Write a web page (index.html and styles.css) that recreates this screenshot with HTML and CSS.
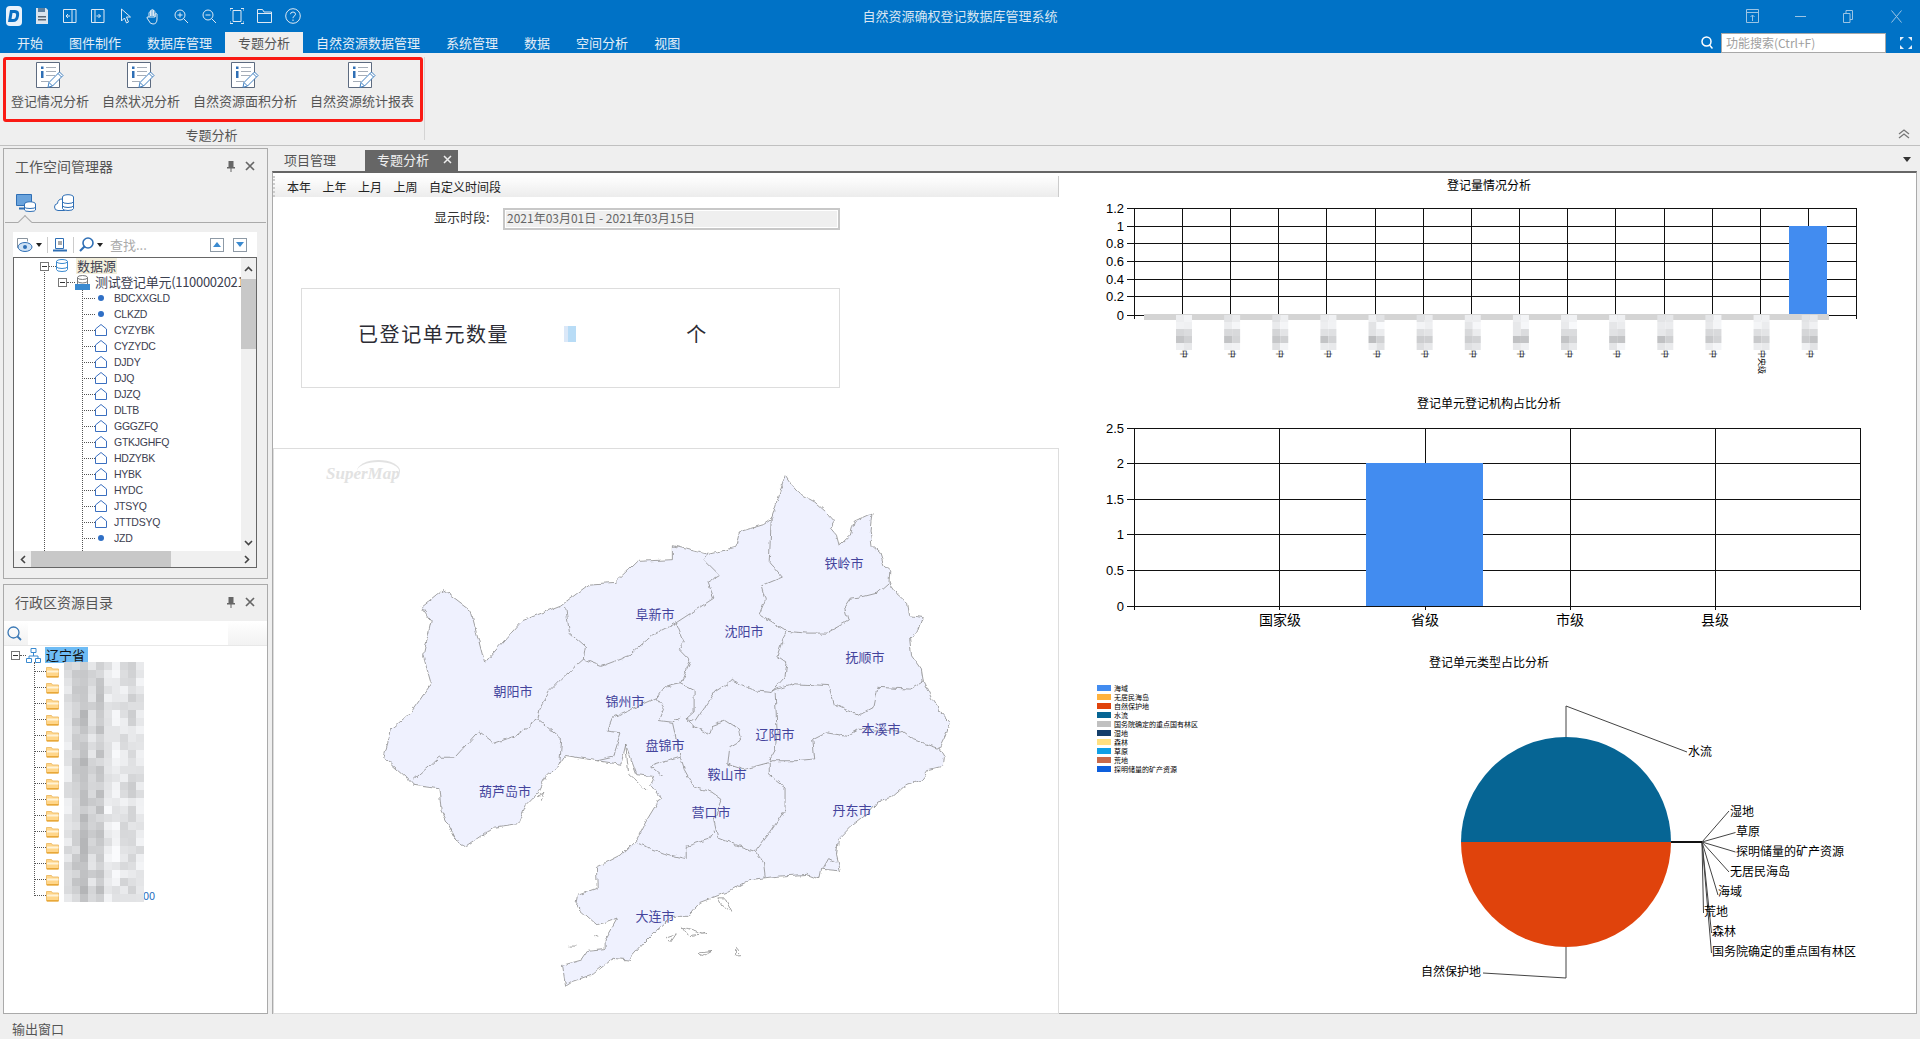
FILE: index.html
```html
<!DOCTYPE html>
<html lang="zh-CN">
<head>
  <meta charset="UTF-8">
  <title>自然资源确权登记数据库管理系统</title>
  <link rel="stylesheet" href="styles.css">
</head>
<body>

<svg class="defs" width="0" height="0">
  <symbol id="i-report" viewBox="0 0 28 26">
    <path d="M.5.5h23v25H.5z" fill="#fff" stroke="#5d6b80"/>
    <path d="M5 4.500h2.500v2.500H5zM5 9h2.500v7H5z" fill="#2f6fb5"/>
    <path d="M10 5.500h10M10 9.500h10M10 13.500h9M5 19.500h8" stroke="#a5adb8" fill="none"/>
    <path d="M13 20.500 23.500 10l3.500 3.500L16.500 24l-4.500 1.300z" fill="#fff" stroke="#3f7fc0"/>
    <path d="M22 11.500l3.500 3.500M13 20.500l3.500 3.500" stroke="#3f7fc0" fill="none"/>
  </symbol>
  <symbol id="i-poly" viewBox="0 0 12 12">
    <path d="M.5 11.500V5L6 .5 11.500 5v6.500z" fill="#fff" stroke="#3a6fc0"/>
  </symbol>
  <symbol id="i-folder" viewBox="0 0 13 13">
    <path d="M.5 2.500h5l1 1.500h6v8H.5z" fill="#ffd68a" stroke="#efc070"/>
    <path d="M1 5.500h11.500v2H1z" fill="#fff3d6"/>
    <path d="M1 11h11.500v1.500H1z" fill="#e8a838"/>
  </symbol>
  <symbol id="i-pin" viewBox="0 0 10 11">
    <path d="M2.500 0h5v6H9v1.500H1V6h1.500zM4.500 7.500h1V11h-1z" fill="#666"/>
  </symbol>
  <symbol id="i-close" viewBox="0 0 10 10">
    <path d="M1 1l8 8M9 1l-8 8" stroke="#666" stroke-width="1.700" fill="none"/>
  </symbol>
</svg>

<header class="titlebar">
  <div class="qat">
    <span class="qat-slot">
      <svg class="logo" width="16" height="20" viewBox="0 0 16 20"><rect width="16" height="20" rx="4" fill="#e8f2fb"/><path d="M4 4h5q5 0 4 6-1 6-6 6H2z" fill="#0a6fc2"/><path d="M6.500 7h2q2 0 1.500 3-.5 3-2.500 3H5.500z" fill="#e8f2fb"/></svg>
    </span>
    <span class="qat-slot">
      <svg width="12" height="16" viewBox="0 0 12 16"><path d="M0 0h10l2 2v14H0z" fill="#d9e4ee"/><path d="M2 0h7v4H2z" fill="#5b7fa0"/><path d="M2 8h8v1.500H2zM2 11h8v1.500H2z" fill="#5a6672"/></svg>
    </span>
    <span class="qat-slot">
      <svg class="line-icon" width="14" height="16" viewBox="0 0 14 16"><path d="M.5 1.500h12.500v13H.500zM9 1.500v13M7 8H3M5 6 3 8l2 2"/></svg>
    </span>
    <span class="qat-slot">
      <svg class="line-icon" width="14" height="16" viewBox="0 0 14 16"><path d="M.5 1.500h12.500v13H.500zM4 1.500v13M5.500 8h4M7.500 6l2 2-2 2"/></svg>
    </span>
    <span class="qat-slot">
      <svg class="line-icon" width="12" height="17" viewBox="0 0 12 17"><path d="M1.500 1v12l3-3 2 5 2-1-2-5h4z"/></svg>
    </span>
    <span class="qat-slot">
      <svg class="line-icon" width="14" height="17" viewBox="0 0 14 17"><path d="M3 9V4.500q1-1 1.500 0V8M4.500 8V2.500q1-1 1.500 0V8M6 8V2q1-1 1.500 0v6M7.500 8V3.500q1-1 1.500 0V9M9 9V6q1.500-1 2 0v5q0 5-4 5-3 0-4-3L1 10q0-1.500 1-1z"/></svg>
    </span>
    <span class="qat-slot">
      <svg class="line-icon" width="15" height="15" viewBox="0 0 15 15"><circle cx="6" cy="6" r="5"/><path d="M9.500 9.500 14 14M3.500 6h5M6 3.500v5"/></svg>
    </span>
    <span class="qat-slot">
      <svg class="line-icon" width="15" height="15" viewBox="0 0 15 15"><circle cx="6" cy="6" r="5"/><path d="M9.500 9.500 14 14M3.500 6h5"/></svg>
    </span>
    <span class="qat-slot">
      <svg class="line-icon" width="14" height="16" viewBox="0 0 14 16"><path d="M3 2.500h8v11H3zM0 3V.5h3M11 .5h3V3M14 13v2.500h-3M3 15.500H0V13"/></svg>
    </span>
    <span class="qat-slot">
      <svg class="line-icon" width="15" height="14" viewBox="0 0 15 14"><path d="M.5 13.500V.5h5l1.500 2.500h7.500v10.500zM.5 4.500h14"/></svg>
    </span>
    <span class="qat-slot">
      <svg class="line-icon" width="16" height="16" viewBox="0 0 16 16"><circle cx="8" cy="8" r="7.300"/><path d="M5.500 6.200q0-2.200 2.500-2.200t2.500 2.200q0 1.300-1.500 2-1 .5-1 2M8 11.500v1.500"/></svg>
    </span>
  </div>
  <div class="app-title">自然资源确权登记数据库管理系统</div>
  <div class="window-btns">
    <span class="win-slot"><svg class="dim-icon" width="13" height="14" viewBox="0 0 13 14"><path d="M.5.5h12v13H.5zM.5 3.500h12M6.500 12V6M4.500 8l2-2 2 2"/></svg></span>
    <span class="win-slot"><svg class="dim-icon" width="11" height="3" viewBox="0 0 11 3"><path d="M0 1.500h11"/></svg></span>
    <span class="win-slot"><svg class="dim-icon" width="10" height="13" viewBox="0 0 10 13"><path d="M.5 3.500h6.500v9H.5zM3 3.500V.5h6.500v9H7"/></svg></span>
    <span class="win-slot"><svg class="dim-icon" width="11" height="13" viewBox="0 0 11 13"><path d="M.5.5l10 12M10.500.5l-10 12"/></svg></span>
  </div>
</header>

<nav class="menubar">
  <a>开始</a>
  <a>图件制作</a>
  <a>数据库管理</a>
  <a class="active">专题分析</a>
  <a>自然资源数据管理</a>
  <a>系统管理</a>
  <a>数据</a>
  <a>空间分析</a>
  <a>视图</a>
  <div class="menu-search">
    <svg class="search-glass" width="12" height="13" viewBox="0 0 12 13"><circle cx="5.500" cy="5.500" r="4.500"/><path d="M8.500 9l3 3.500"/></svg>
    <div class="search-box">功能搜索(Ctrl+F)</div>
    <span class="full-slot">
      <svg width="12" height="12" viewBox="0 0 12 12"><path d="M0 0h4L0 4zM12 0H8l4 4zM0 12h4l-4-4zM12 12H8l4-4z" fill="#e6f0fa"/></svg>
    </span>
  </div>
</nav>

<section class="ribbon">
  <div class="ribbon-group">
    <div class="ribbon-items">
      <div class="ribbon-item"><svg width="28" height="26"><use href="#i-report"/></svg><span>登记情况分析</span></div>
      <div class="ribbon-item"><svg width="28" height="26"><use href="#i-report"/></svg><span>自然状况分析</span></div>
      <div class="ribbon-item"><svg width="28" height="26"><use href="#i-report"/></svg><span>自然资源面积分析</span></div>
      <div class="ribbon-item"><svg width="28" height="26"><use href="#i-report"/></svg><span>自然资源统计报表</span></div>
    </div>
    <div class="group-label">专题分析</div>
  </div>
  <svg class="collapse" width="12" height="10" viewBox="0 0 12 10"><path d="M1 5l5-4 5 4M1 9l5-4 5 4" fill="none" stroke="#777" stroke-width="1.300"/></svg>
</section>

<div class="workspace">
  <aside class="sidebar">
    <div class="panel panel-workspace">
      <div class="panel-head">
        <span>工作空间管理器</span>
        <svg width="10" height="11"><use href="#i-pin"/></svg>
        <svg width="10" height="10"><use href="#i-close"/></svg>
      </div>
      <div class="panel-tabs">
        <svg width="20" height="18" viewBox="0 0 20 18"><path d="M.5.5h15v11H.5z" fill="#6aa3dc" stroke="#2f6fb5"/><path d="M3 14.500h9" stroke="#2f6fb5" stroke-width="2"/><ellipse cx="14" cy="10" rx="5.500" ry="2.200" fill="#fff" stroke="#2f6fb5"/><path d="M8.500 10v6q0 1.500 5.500 1.500t5.500-1.500v-6M8.500 13q0 1.500 5.500 1.500t5.500-1.500" fill="#fff" stroke="#2f6fb5"/></svg>
        <svg width="20" height="17" viewBox="0 0 20 17"><path d="M11 16.500H4q-3.500 0-3.500-3.500 0-3 3-3.500Q4 5 8 5" fill="#fff" stroke="#2f6fb5"/><ellipse cx="14" cy="3" rx="5.500" ry="2.300" fill="#fff" stroke="#2f6fb5"/><path d="M8.500 3v11.500q0 2 5.500 2t5.500-2V3M8.500 7.500q0 2 5.500 2t5.500-2M8.500 11.500q0 2 5.500 2t5.500-2" fill="#fff" stroke="#2f6fb5"/></svg>
      </div>
      <div class="tree-toolbar">
        <svg width="16" height="14" viewBox="0 0 16 14"><path d="M.5.5h10v3M.5.5v9h3" fill="none" stroke="#8a949e"/><ellipse cx="8" cy="9" rx="7" ry="4.500" fill="#cfe2f5" stroke="#2f6fb5"/><circle cx="8" cy="9" r="2" fill="#2f6fb5"/></svg>
        <span class="caret"></span>
        <span class="tool-sep"></span>
        <svg width="14" height="14" viewBox="0 0 14 14"><path d="M2.500.5h8v10h-8z" fill="#fff" stroke="#2f6fb5"/><path d="M5 3h4v4H5z" fill="#aaa"/><path d="M0 12.500h14" stroke="#2f6fb5" stroke-width="2"/></svg>
        <span class="tool-sep"></span>
        <svg width="15" height="15" viewBox="0 0 15 15"><circle cx="9" cy="6" r="5" fill="#fff" stroke="#2f6fb5" stroke-width="1.600"/><path d="M5.500 9.500 1 14" stroke="#2f6fb5" stroke-width="2.200"/></svg>
        <span class="caret"></span>
        <span class="find-hint">查找...</span>
        <span class="nav-btn"><i class="tri-up"></i></span>
        <span class="nav-btn"><i class="tri-down"></i></span>
      </div>
      <div class="tree-box">
        <div class="tree-view">
          <div class="row row-root">
            <i class="expander"></i><i class="stub stub-7"></i>
            <svg width="12" height="14" viewBox="0 0 12 14"><ellipse cx="6" cy="2.500" rx="5.500" ry="2" fill="#fff" stroke="#3a8ad0"/><path d="M.5 2.500v8q0 2 5.500 2t5.500-2v-8M.5 7.500q0 2 5.500 2t5.500-2" fill="none" stroke="#3a8ad0"/></svg>
            <span class="root-label">数据源</span>
          </div>
          <div class="row row-source">
            <i class="expander"></i><i class="stub stub-8"></i>
            <svg width="15" height="15" viewBox="0 0 15 15"><ellipse cx="7.500" cy="2.500" rx="5" ry="2" fill="#fff" stroke="#777"/><path d="M2.500 2.500v7h10v-7M2.500 6q0 2 5 2t5-2" fill="none" stroke="#777"/><path d="M0 9h15v6H0z" fill="#3a8ad0"/></svg>
            <span>测试登记单元(11000020210</span>
          </div>
          <div class="row row-item"><i class="stub"></i><b class="point"></b><span>BDCXXGLD</span></div>
          <div class="row row-item"><i class="stub"></i><b class="point"></b><span>CLKZD</span></div>
          <div class="row row-item"><i class="stub"></i><svg width="12" height="12"><use href="#i-poly"/></svg><span>CYZYBK</span></div>
          <div class="row row-item"><i class="stub"></i><svg width="12" height="12"><use href="#i-poly"/></svg><span>CYZYDC</span></div>
          <div class="row row-item"><i class="stub"></i><svg width="12" height="12"><use href="#i-poly"/></svg><span>DJDY</span></div>
          <div class="row row-item"><i class="stub"></i><svg width="12" height="12"><use href="#i-poly"/></svg><span>DJQ</span></div>
          <div class="row row-item"><i class="stub"></i><svg width="12" height="12"><use href="#i-poly"/></svg><span>DJZQ</span></div>
          <div class="row row-item"><i class="stub"></i><svg width="12" height="12"><use href="#i-poly"/></svg><span>DLTB</span></div>
          <div class="row row-item"><i class="stub"></i><svg width="12" height="12"><use href="#i-poly"/></svg><span>GGGZFQ</span></div>
          <div class="row row-item"><i class="stub"></i><svg width="12" height="12"><use href="#i-poly"/></svg><span>GTKJGHFQ</span></div>
          <div class="row row-item"><i class="stub"></i><svg width="12" height="12"><use href="#i-poly"/></svg><span>HDZYBK</span></div>
          <div class="row row-item"><i class="stub"></i><svg width="12" height="12"><use href="#i-poly"/></svg><span>HYBK</span></div>
          <div class="row row-item"><i class="stub"></i><svg width="12" height="12"><use href="#i-poly"/></svg><span>HYDC</span></div>
          <div class="row row-item"><i class="stub"></i><svg width="12" height="12"><use href="#i-poly"/></svg><span>JTSYQ</span></div>
          <div class="row row-item"><i class="stub"></i><svg width="12" height="12"><use href="#i-poly"/></svg><span>JTTDSYQ</span></div>
          <div class="row row-item"><i class="stub"></i><b class="point"></b><span>JZD</span></div>
        </div>
        <div class="vscroll">
          <svg class="chev" width="9" height="6" viewBox="0 0 9 6"><path d="M1 5l3.500-3.500L8 5"/></svg>
          <div class="vthumb"></div>
          <svg class="chev chev-end" width="9" height="6" viewBox="0 0 9 6"><path d="M1 1l3.500 3.500L8 1"/></svg>
        </div>
        <div class="hscroll">
          <svg class="chev" width="6" height="9" viewBox="0 0 6 9"><path d="M5 1 1.500 4.500 5 8"/></svg>
          <div class="hthumb"></div>
          <svg class="chev chev-end" width="6" height="9" viewBox="0 0 6 9"><path d="M1 1l3.500 3.500L1 8"/></svg>
        </div>
      </div>
    </div>

    <div class="panel panel-regions">
      <div class="panel-head">
        <span>行政区资源目录</span>
        <svg width="10" height="11"><use href="#i-pin"/></svg>
        <svg width="10" height="10"><use href="#i-close"/></svg>
      </div>
      <div class="region-search">
        <svg width="15" height="15" viewBox="0 0 15 15"><circle cx="6.500" cy="6.500" r="5.500" fill="none" stroke="#3a78b5" stroke-width="1.300"/><path d="M10.500 10.500 14 14" stroke="#3a78b5" stroke-width="1.800"/></svg>
        <div class="region-input"></div>
      </div>
      <div class="region-tree">
        <div class="region-row region-root">
          <i class="expander"></i><i class="stub stub-6"></i>
          <svg width="15" height="15" viewBox="0 0 15 15"><path d="M5 .5h5v4H5zM.5 10.500h5v4h-5zM9.500 10.500h5v4h-5zM7.500 4.500V8M3 10.500V8h9v2.500" fill="#fff" stroke="#3a8ad0"/></svg>
          <span class="region-selected">辽宁省</span>
        </div>
        <div class="region-row"><i class="stub"></i><svg width="13" height="13"><use href="#i-folder"/></svg></div>
        <div class="region-row"><i class="stub"></i><svg width="13" height="13"><use href="#i-folder"/></svg></div>
        <div class="region-row"><i class="stub"></i><svg width="13" height="13"><use href="#i-folder"/></svg></div>
        <div class="region-row"><i class="stub"></i><svg width="13" height="13"><use href="#i-folder"/></svg></div>
        <div class="region-row"><i class="stub"></i><svg width="13" height="13"><use href="#i-folder"/></svg></div>
        <div class="region-row"><i class="stub"></i><svg width="13" height="13"><use href="#i-folder"/></svg></div>
        <div class="region-row"><i class="stub"></i><svg width="13" height="13"><use href="#i-folder"/></svg></div>
        <div class="region-row"><i class="stub"></i><svg width="13" height="13"><use href="#i-folder"/></svg></div>
        <div class="region-row"><i class="stub"></i><svg width="13" height="13"><use href="#i-folder"/></svg></div>
        <div class="region-row"><i class="stub"></i><svg width="13" height="13"><use href="#i-folder"/></svg></div>
        <div class="region-row"><i class="stub"></i><svg width="13" height="13"><use href="#i-folder"/></svg></div>
        <div class="region-row"><i class="stub"></i><svg width="13" height="13"><use href="#i-folder"/></svg></div>
        <div class="region-row"><i class="stub"></i><svg width="13" height="13"><use href="#i-folder"/></svg></div>
        <div class="region-row"><i class="stub"></i><svg width="13" height="13"><use href="#i-folder"/></svg></div>
        <div class="region-row"><i class="stub"></i><svg width="13" height="13"><use href="#i-folder"/></svg><span class="region-tail">00</span></div>
        <div id="treeMosaic" class="tree-mosaic"></div>
      </div>
    </div>
  </aside>

  <main class="content">
    <div class="doc-tabs">
      <span class="doc-tab">项目管理</span>
      <span class="doc-tab active">专题分析<svg width="9" height="9" viewBox="0 0 9 9"><path d="M1 1l7 7M8 1 1 8" stroke="#eee" stroke-width="1.500"/></svg></span>
      <i class="doc-menu"></i>
    </div>
    <div class="doc-body">
      <div class="left-col">
        <div class="time-bar">
          <span>本年</span><span>上年</span><span>上月</span><span>上周</span><span>自定义时间段</span>
        </div>
        <div class="period-row">
          <label>显示时段:</label>
          <div class="period-value">2021年03月01日 - 2021年03月15日</div>
        </div>
        <div class="count-card">
          <span class="count-title">已登记单元数量</span>
          <span class="count-bar"></span>
          <span class="count-unit">个</span>
        </div>
        <div class="map-panel">
          <span class="watermark">SuperMap</span>
          <svg class="map" width="620" height="550" viewBox="0 0 620 550">
            <defs>
              <filter id="jag" x="-5%" y="-5%" width="110%" height="110%" color-interpolation-filters="sRGB">
                <feTurbulence type="fractalNoise" baseFrequency="0.14" numOctaves="2" seed="7"/>
                <feDisplacementMap in="SourceGraphic" scale="5" xChannelSelector="R" yChannelSelector="G"/>
              </filter>
            </defs>
            <g filter="url(#jag)">
              <g transform="scale(.3954 .3497)">
                <path class="land" d="M1075 45 1090 70 1110 95 1150 120 1180 150 1200 175 1190 195 1205 215 1212 245 1240 215 1250 175 1295 152 1290 200 1295 245 1315 265 1325 300 1340 315 1338 350 1360 385 1385 410 1390 445 1422 450 1410 490 1390 510 1395 560 1420 600 1425 635 1445 680 1465 715 1492 750 1480 790 1465 825 1478 850 1475 875 1440 885 1420 915 1375 935 1345 965 1310 975 1285 1010 1240 1050 1210 1085 1205 1130 1215 1175 1165 1170 1160 1198 1130 1185 1060 1190 1025 1195 985 1200 930 1235 860 1265 830 1305 790 1305 750 1345 715 1385 680 1430 640 1425 590 1470 540 1490 520 1505 512 1445 560 1430 575 1405 620 1400 620 1370 650 1310 600 1330 570 1300 545 1275 550 1245 600 1225 598 1165 660 1130 700 1085 725 1030 760 965 735 930 745 905 700 900 672 815 660 870 600 860 520 845 505 870 470 905 450 950 420 985 400 1040 340 1050 270 1105 245 1090 205 1000 200 940 135 930 115 905 60 850 80 770 130 720 180 640 160 560 180 460 155 420 210 370 280 430 315 580 370 510 410 460 510 415 580 355 645 350 700 290 790 285 790 245 880 270 950 250 960 205 1020 185 1040 170 1060 100z"/>
                <path class="border" d="M520 420 530 495 570 535 565 570 510 625 480 660 455 710 450 740M135 915 200 850 240 850 300 775 340 810 390 790 450 740 510 800 505 870M565 570 610 590 680 560 740 500 800 465 895 395M895 395 880 350 910 330 870 285 880 270M800 465 820 520 805 540 835 575 810 640M810 640 770 650 750 680 770 710 757 745 790 750 810 735M810 640 845 660 845 720 825 740 840 760M750 680 640 735 625 775 660 780 640 850 600 860M790 750 800 800 810 850 735 875 765 905M825 740 850 745 900 660 940 630 1000 660 1040 665 1075 620 1080 580 1055 560 1070 510 1080 490M1040 170 1035 290 1068 335 1015 360 1025 400 1010 440 1080 490M1080 490 1130 495 1180 495 1235 460 1225 420 1240 395 1275 390 1310 380 1340 350M1040 660 1100 640 1185 645 1200 700 1260 730 1300 705 1310 650 1390 655 1425 630M1145 800 1180 780 1230 790 1260 770 1370 775 1400 800 1465 825M1050 665 1055 780 1050 830 1035 860 1100 860 1150 855 1145 800M840 760 885 785 890 760 925 745 960 770 965 800 935 820 930 870 970 885 1035 865 1035 900 1075 935 1075 1000 1040 1060 1000 1120M810 850 820 885 845 935 890 950 915 970 895 1030 905 1080 950 1100 1000 1120M1000 1120 1020 1150 1025 1195M895 1060 880 1085 825 1105 825 1140 770 1125 700 1095M1170 1170 1185 1140 1205 1150M672 815 680 900 700 920 725 945"/>
                <path class="border" d="M905 1255 925 1255 940 1290 915 1275zM815 1335 875 1355 830 1360zM775 1365 800 1355 785 1380zM855 1410 890 1405 865 1420zM950 1395 965 1415 950 1415zM530 1390 545 1390M590 1360 600 1365M450 960 465 950 455 975"/>
              </g>
            </g>
            <g class="map-labels">
              <text x="484" y="108">铁岭市</text>
              <text x="295" y="159">阜新市</text>
              <text x="384" y="176">沈阳市</text>
              <text x="505" y="202">抚顺市</text>
              <text x="153" y="236">朝阳市</text>
              <text x="265" y="246">锦州市</text>
              <text x="521" y="274">本溪市</text>
              <text x="415" y="279">辽阳市</text>
              <text x="305" y="290">盘锦市</text>
              <text x="367" y="319">鞍山市</text>
              <text x="145" y="336">葫芦岛市</text>
              <text x="351" y="357">营口市</text>
              <text x="492" y="355">丹东市</text>
              <text x="295" y="461">大连市</text>
            </g>
          </svg>
        </div>
      </div>

      <div class="right-col">
        <svg id="chartVolume" class="chart" width="857" height="222" viewBox="1059 173 857 222">
          <text class="chart-title" x="1489" y="190">登记量情况分析</text>
          <path class="grid" d="M1126.500 208.500H1856.500M1126.500 226.500H1856.500M1126.500 243.500H1856.500M1126.500 261.500H1856.500M1126.500 279.500H1856.500M1126.500 296.500H1856.500M1126.500 315.500H1856.500"/>
          <path class="grid" d="M1134.500 208V319M1182.500 208V319M1230.500 208V319M1278.500 208V319M1326.500 208V319M1375.500 208V319M1423.500 208V319M1471.500 208V319M1519.500 208V319M1567.500 208V319M1615.500 208V319M1664.500 208V319M1712.500 208V319M1760.500 208V319M1808.500 208V319M1856.500 208V319"/>
          <text class="axis-y" x="1124" y="213">1.2</text>
          <text class="axis-y" x="1124" y="231">1</text>
          <text class="axis-y" x="1124" y="248">0.8</text>
          <text class="axis-y" x="1124" y="266">0.6</text>
          <text class="axis-y" x="1124" y="284">0.4</text>
          <text class="axis-y" x="1124" y="301">0.2</text>
          <text class="axis-y" x="1124" y="320">0</text>
          <rect x="1789" y="226" width="38" height="89" fill="#428cf0"/>
          <rect x="1144" y="314" width="685" height="6" fill="#d4d4d4"/>
          <g id="volumeLabels"></g>
        </svg>

        <svg class="chart" width="857" height="255" viewBox="1059 395 857 255">
          <text class="chart-title" x="1489" y="408">登记单元登记机构占比分析</text>
          <path class="grid" d="M1126.500 428.500H1860.500M1126.500 463.500H1860.500M1126.500 499.500H1860.500M1126.500 534.500H1860.500M1126.500 570.500H1860.500M1126.500 606.500H1860.500"/>
          <path class="grid" d="M1134.500 428V610M1279.500 428V610M1425.500 428V610M1570.500 428V610M1715.500 428V610M1860.500 428V610"/>
          <text class="axis-y" x="1124" y="433">2.5</text>
          <text class="axis-y" x="1124" y="468">2</text>
          <text class="axis-y" x="1124" y="504">1.5</text>
          <text class="axis-y" x="1124" y="539">1</text>
          <text class="axis-y" x="1124" y="575">0.5</text>
          <text class="axis-y" x="1124" y="611">0</text>
          <rect x="1366" y="463" width="117" height="143" fill="#428cf0"/>
          <text class="axis-x" x="1280" y="625">国家级</text>
          <text class="axis-x" x="1425" y="625">省级</text>
          <text class="axis-x" x="1570" y="625">市级</text>
          <text class="axis-x" x="1715" y="625">县级</text>
        </svg>

        <svg class="chart" width="857" height="363" viewBox="1059 650 857 363">
          <text class="chart-title" x="1489" y="667">登记单元类型占比分析</text>
          <g class="legend">
            <rect x="1097" y="685" width="14" height="6" fill="#428cf0"/><text x="1114" y="691">海域</text>
            <rect x="1097" y="694" width="14" height="6" fill="#ffb23e"/><text x="1114" y="700">无居民海岛</text>
            <rect x="1097" y="703" width="14" height="6" fill="#e0430c"/><text x="1114" y="709">自然保护地</text>
            <rect x="1097" y="712" width="14" height="6" fill="#066594"/><text x="1114" y="718">水流</text>
            <rect x="1097" y="721" width="14" height="6" fill="#c0c0c0"/><text x="1114" y="727">国务院确定的重点国有林区</text>
            <rect x="1097" y="730" width="14" height="6" fill="#153e6a"/><text x="1114" y="736">湿地</text>
            <rect x="1097" y="739" width="14" height="6" fill="#ffe081"/><text x="1114" y="745">森林</text>
            <rect x="1097" y="748" width="14" height="6" fill="#0f9fe6"/><text x="1114" y="754">草原</text>
            <rect x="1097" y="757" width="14" height="6" fill="#c8694a"/><text x="1114" y="763">荒地</text>
            <rect x="1097" y="766" width="14" height="6" fill="#0e5fdc"/><text x="1114" y="772">探明储量的矿产资源</text>
          </g>
          <path d="M1461 842a105 105 0 0 1 210 0z" fill="#066594"/>
          <path d="M1461 842a105 105 0 0 0 210 0z" fill="#e0430c"/>
          <path class="leader" d="M1566 737V706L1687 752M1566 947V978L1483 973"/>
          <path class="leader" d="M1702 842 1729 811M1702 842 1735.500 832.500M1702 842 1735.500 852M1702 842 1729 872M1702 842 1718 895M1702 842 1703.500 913M1702 842 1711.500 933M1702 842 1711.500 953"/>
          <path class="leader-main" d="M1671 842H1702"/>
          <g class="pie-label">
            <text x="1688" y="756">水流</text>
            <text x="1421" y="976">自然保护地</text>
            <text x="1730" y="816">湿地</text>
            <text x="1736" y="836">草原</text>
            <text x="1736" y="856">探明储量的矿产资源</text>
            <text x="1730" y="876">无居民海岛</text>
            <text x="1718" y="896">海域</text>
            <text x="1704" y="916">荒地</text>
            <text x="1712" y="936">森林</text>
            <text x="1712" y="956">国务院确定的重点国有林区</text>
          </g>
        </svg>
      </div>
    </div>
  </main>
</div>

<footer class="statusbar">输出窗口</footer>

<script src="script.js"></script>
</body>
</html>
```

FILE: styles.css
```css
* {
  box-sizing: border-box;
}

html, body {
  margin: 0;
  height: 1039px;
  overflow: hidden;
}

body {
  background: #efefef;
  color: #444;
  font-family: "Noto Sans CJK SC", "Liberation Sans", sans-serif;
  font-size: 13px;
  line-height: 16px;
}

.defs {
  position: absolute;
}

svg {
  flex-shrink: 0;
}

/* title bar + menu */
.titlebar {
  display: grid;
  grid-template-columns: 1fr auto 1fr;
  height: 32px;
  background: #0072c6;
  align-items: center;
}

.qat {
  display: flex;
  align-items: center;
}

.qat-slot {
  display: flex;
  width: 27.900px;
  justify-content: center;
  align-items: center;
}

.line-icon {
  fill: none;
  stroke: #dfe9f3;
  stroke-width: 1;
}

.app-title {
  color: #d9e6f2;
  font-size: 13px;
}

.window-btns {
  display: flex;
  justify-content: flex-end;
  align-items: center;
}

.win-slot {
  display: flex;
  width: 48px;
  justify-content: center;
  align-items: center;
}

.dim-icon {
  fill: none;
  stroke: #9cc4e4;
  stroke-width: 1;
}

.menubar {
  display: flex;
  height: 21px;
  padding-left: 4px;
  background: #0072c6;
  color: #e4eef7;
}

.menubar a {
  padding: 0 13px;
  line-height: 21px;
}

.menubar a.active {
  background: #efefef;
  color: #555;
}

.menu-search {
  display: flex;
  margin-left: auto;
  align-items: center;
}

.search-glass {
  margin-right: 8px;
  fill: none;
  stroke: #fff;
  stroke-width: 1.500;
}

.search-box {
  width: 165px;
  height: 20px;
  margin-top: 1px;
  padding-left: 4px;
  background: #fff;
  border: 1px solid #a8a8a8;
  color: #a0a0a0;
  font-size: 12px;
  line-height: 18px;
}

.full-slot {
  display: flex;
  width: 34px;
  padding-left: 14px;
}

/* ribbon */
.ribbon {
  position: relative;
  height: 93px;
  padding: 4px 0 0 3px;
  border-bottom: 1px solid #c0c0c0;
}

.ribbon-group {
  width: 422px;
  height: 83px;
  border-right: 1px solid #d4d4d4;
}

.ribbon-items {
  display: flex;
  width: 420px;
  height: 65px;
  padding: 2px 0 0 5px;
  gap: 13px;
  border: 3px solid #fa1a14;
  border-radius: 3px;
}

.ribbon-item {
  display: flex;
  flex-direction: column;
  align-items: center;
  color: #555;
}

.ribbon-item span {
  margin-top: 5px;
}

.group-label {
  margin-top: 5px;
  text-align: center;
  color: #555;
  padding-right: 4px;
}

.collapse {
  position: absolute;
  right: 10px;
  bottom: 6px;
}

/* workspace */
.workspace {
  display: flex;
  height: 868px;
}

.sidebar {
  display: flex;
  flex-direction: column;
  width: 272px;
  padding: 2px 4px 0 3px;
  gap: 5px;
}

.panel {
  border: 1px solid #aaa;
}

.panel-workspace {
  height: 431px;
}

.panel-regions {
  height: 430px;
  background: #fff;
}

.panel-head {
  display: flex;
  height: 36px;
  padding: 0 12px 2px 11px;
  gap: 9px;
  background: #efefef;
  align-items: center;
  font-size: 14px;
  color: #555;
}

.panel-head span {
  margin-right: auto;
}

.panel-tabs {
  position: relative;
  display: flex;
  height: 38px;
  margin: 0 1px;
  padding: 9px 0 0 11px;
  gap: 18px;
  border-bottom: 1px solid #aaa;
}

.panel-tabs::after {
  content: "";
  position: absolute;
  left: 15px;
  bottom: -5px;
  width: 9px;
  height: 9px;
  background: #efefef;
  border-top: 1px solid #aaa;
  border-left: 1px solid #aaa;
  transform: rotate(45deg);
}

.tree-toolbar {
  display: flex;
  width: 244px;
  height: 25px;
  margin: 9px 0 0 9px;
  padding: 0 10px 0 4px;
  background: #fff;
  align-items: center;
}

.caret {
  width: 0;
  height: 0;
  margin: 0 5px 0 3px;
  border: 3px solid transparent;
  border-top: 4px solid #222;
  border-bottom: 0;
}

.tool-sep {
  width: 1px;
  height: 16px;
  margin-right: 5px;
  background: #ccc;
}

.tree-toolbar > svg + .tool-sep {
  margin-left: 6px;
}

.find-hint {
  margin-right: auto;
  color: #aaa;
  font-size: 13px;
  margin-left: 2px;
}

.nav-btn {
  display: flex;
  width: 14px;
  height: 14px;
  margin-left: 9px;
  border: 1px solid #8e9aa6;
  align-items: center;
  justify-content: center;
}

.tri-up, .tri-down {
  width: 0;
  height: 0;
  border-left: 4px solid transparent;
  border-right: 4px solid transparent;
}

.tri-up {
  border-bottom: 5px solid #3a8ad0;
}

.tri-down {
  border-top: 5px solid #3a8ad0;
}

.tree-box {
  display: grid;
  grid-template-columns: 1fr 15px;
  grid-template-rows: 1fr 16px;
  width: 244px;
  height: 311px;
  margin-left: 9px;
  background: #fff;
  border: 1px solid #666;
}

.tree-view {
  position: relative;
  overflow: hidden;
  font-family: "Liberation Sans", "Noto Sans CJK SC", sans-serif;
  font-size: 10.500px;
  color: #3c4050;
}

.tree-view::before,
.tree-view::after {
  content: "";
  position: absolute;
  bottom: 0;
  border-left: 1px dotted #555;
}

.tree-view::before {
  left: 30px;
  top: 12px;
}

.tree-view::after {
  left: 68px;
  top: 32px;
}

.row {
  position: relative;
  display: flex;
  height: 16px;
  align-items: center;
  white-space: nowrap;
}

.row-root {
  padding-left: 26px;
  font-family: "Noto Sans CJK SC", sans-serif;
  font-size: 13px;
}

.root-label {
  margin-left: 8px;
  padding: 0 1px;
  background: #f3efdc;
}

.row-source {
  padding-left: 44px;
  font-size: 12px;
  font-family: "Noto Sans CJK SC", sans-serif;
}

.row-source span {
  margin-left: 5px;
  font-size: 13px;
  letter-spacing: -.3px;
}

.row-item {
  padding-left: 68px;
  letter-spacing: -.25px;
}

.row-item span {
  margin-left: 7px;
}

.expander {
  position: relative;
  z-index: 1;
  flex-shrink: 0;
  width: 9px;
  height: 9px;
  background: #fff;
  border: 1px solid #777;
}

.expander::after {
  content: "";
  position: absolute;
  left: 1px;
  right: 1px;
  top: 3px;
  height: 1px;
  background: #333;
}

.stub {
  flex-shrink: 0;
  width: 13px;
  border-top: 1px dotted #555;
}

.stub-7 {
  width: 7px;
}

.stub-8 {
  width: 8px;
}

.point {
  display: block;
  width: 6px;
  height: 6px;
  margin: 0 3px;
  background: #2f6fc5;
  border-radius: 50%;
}

.vscroll {
  display: flex;
  flex-direction: column;
  padding-top: 8px;
  background: #f0f0f0;
  align-items: center;
}

.vthumb {
  align-self: stretch;
  height: 70px;
  margin-top: 7px;
  background: #c8c8c8;
}

.hscroll {
  grid-column: 1 / 3;
  display: flex;
  padding-left: 6px;
  background: #f0f0f0;
  align-items: center;
}

.hthumb {
  align-self: stretch;
  width: 140px;
  margin-left: 5px;
  background: #c8c8c8;
}

.chev {
  fill: none;
  stroke: #444;
  stroke-width: 1.600;
}

.chev-end {
  margin: auto 6px auto auto;
}

.vscroll .chev-end {
  margin: auto 0 5px;
}

.region-search {
  display: flex;
  height: 25px;
  padding-left: 3px;
  background: linear-gradient(#fff, #f2f2f2);
  align-items: center;
  border-bottom: 1px solid #e8e8e8;
}

.region-input {
  width: 200px;
  height: 24px;
  margin-left: 6px;
  background: #fff;
}

.region-tree {
  position: relative;
  padding: 1px 0 0 7px;
}

.region-tree::before {
  content: "";
  position: absolute;
  left: 30px;
  top: 16px;
  height: 234px;
  border-left: 1px dotted #555;
}

.region-row {
  display: flex;
  height: 16px;
  padding-left: 23px;
  align-items: center;
}

.region-row .stub {
  width: 12px;
}

.region-root {
  padding-left: 0;
}

.region-root .stub-6 {
  width: 6px;
}

.region-selected {
  margin-left: 4px;
  padding: 0 1px;
  width: 43px;
  background: #6ebcf5;
  color: #111;
  font-size: 13px;
}

.region-tail {
  margin-left: 84px;
  color: #2a6fc0;
  font-size: 11px;
}

.tree-mosaic {
  position: absolute;
  left: 60px;
  top: 16px;
  display: grid;
  grid-template-columns: repeat(10, 8px);
  grid-auto-rows: 8px;
}

/* document area */
.content {
  width: 1645px;
}

.doc-tabs {
  position: relative;
  display: flex;
  height: 25px;
  padding-top: 4px;
}

.doc-tab {
  display: flex;
  width: 93px;
  padding: 0 0 2px 16px;
  gap: 14px;
  align-items: center;
  color: #555;
}

.doc-tab.active {
  background: #666;
  color: #f0f0f0;
  padding-left: 12px;
}

.doc-tab:first-child {
  padding-left: 12px;
}

.doc-menu {
  position: absolute;
  right: 6px;
  top: 11px;
  border-left: 4px solid transparent;
  border-right: 4px solid transparent;
  border-top: 5px solid #333;
}

.doc-body {
  display: flex;
  height: 843px;
  background: #fff;
  border-top: 2px solid #666;
  border-left: 1px solid #aaa;
  border-right: 1px solid #aaa;
  border-bottom: 1px solid #aaa;
}

.left-col {
  width: 786px;
}

.time-bar {
  display: flex;
  height: 21px;
  margin-top: 3px;
  padding-left: 12px;
  gap: 11.500px;
  background: linear-gradient(#fff, #ececec);
  border-right: 1px solid #ccc;
  align-items: center;
  font-size: 12px;
  color: #222;
  border-left: 2px dotted #ccc;
}

.period-row {
  display: flex;
  height: 22px;
  margin-top: 11px;
  padding-left: 161px;
  align-items: center;
}

.period-row label {
  width: 69px;
  margin-top: -4px;
  color: #333;
}

.period-value {
  width: 337px;
  height: 22px;
  padding-left: 2px;
  background: #efefef;
  border: 2px solid #c8c8c8;
  outline: 1px solid #fff;
  outline-offset: -3px;
  color: #666;
  font-size: 12px;
  line-height: 16px;
}

.count-card {
  display: flex;
  width: 539px;
  height: 100px;
  margin: 58px 0 0 28px;
  padding: 0 0 8px 56px;
  border: 1px solid #ddd;
  align-items: center;
  font-size: 20px;
  line-height: 24px;
  color: #2c2c34;
}

.count-title {
  letter-spacing: 1.600px;
}

.count-bar {
  width: 12px;
  height: 16px;
  margin: 0 110px 0 55px;
  background: linear-gradient(90deg, #dbe8f8 30%, #b8dcf6 30%);
}

.map-panel {
  position: relative;
  height: 566px;
  margin-top: 60px;
  border: 1px solid #ddd;
}

.watermark {
  position: absolute;
  left: 52px;
  top: 17px;
  color: #e2e2e2;
  font-family: "Liberation Serif", serif;
  font-size: 17px;
  font-style: italic;
  font-weight: bold;
}

.watermark::after {
  content: "";
  position: absolute;
  right: 0;
  top: -6px;
  width: 42px;
  height: 20px;
  border-top: 2px solid #e2e2e2;
  border-right: 1px solid #e2e2e2;
  border-radius: 50%;
}

.map {
  position: absolute;
  left: 86px;
  top: 11px;
}

.land {
  fill: #eff1fe;
  stroke: #8c8c8c;
  stroke-width: .8;
  vector-effect: non-scaling-stroke;
}

.border {
  fill: none;
  stroke: #8c8c8c;
  stroke-width: .8;
  vector-effect: non-scaling-stroke;
}

.map-labels text {
  fill: #44449c;
  font-size: 13px;
  text-anchor: middle;
}

.right-col {
  width: 857px;
}

.chart {
  display: block;
}

.chart text {
  fill: #000;
  font-family: "Noto Sans CJK SC", sans-serif;
}

.chart-title {
  font-size: 12px;
  text-anchor: middle;
}

.grid {
  fill: none;
  stroke: #111;
  stroke-width: 1;
  shape-rendering: crispEdges;
}

.chart .axis-y {
  font-family: "Liberation Sans", sans-serif;
  font-size: 13px;
  text-anchor: end;
}

.axis-x {
  font-size: 14px;
  text-anchor: middle;
}

.legend text {
  font-size: 7px;
}

.leader {
  fill: none;
  stroke: #444;
  stroke-width: 1;
}

.leader-main {
  fill: none;
  stroke: #111;
  stroke-width: 2;
}

.pie-label text {
  font-size: 12px;
}

.chart .rot-label {
  font-size: 8px;
}

.statusbar {
  padding: 7px 0 0 12px;
  color: #555;
}
```

FILE: script.js
```js
// small repeatable noise so the blurred blocks look the same every load
let seed = 37;
function noise() {
  seed = (seed * 16807) % 2147483647;
  return seed / 2147483647;
}

function grey(base, spread) {
  const v = Math.round(base + (noise() - 0.5) * spread);
  return `rgb(${v}, ${v + 1}, ${v + 3})`;
}

// blurred names in the region tree
const colTones = [228, 208, 192, 216, 202, 234, 236, 226, 218, 230];
const mosaic = document.getElementById('treeMosaic');
for (let row = 0; row < 30; row++) {
  for (let col = 0; col < 10; col++) {
    const cell = document.createElement('div');
    cell.style.background = grey(colTones[col], 30);
    mosaic.appendChild(cell);
  }
}

// blurred axis labels of the first chart
const labels = document.getElementById('volumeLabels');
const rowTones = [232, 236, 222, 198, 230];
const NS = 'http://www.w3.org/2000/svg';
for (let i = 0; i < 14; i++) {
  const x = 1176 + i * 48.13;
  for (let row = 0; row < 5; row++) {
    for (let col = 0; col < 2; col++) {
      const r = document.createElementNS(NS, 'rect');
      r.setAttribute('x', x + col * 8);
      r.setAttribute('y', 315 + row * 7);
      r.setAttribute('width', 8);
      r.setAttribute('height', 7);
      r.setAttribute('fill', grey(rowTones[row] + col * 4, 20));
      labels.appendChild(r);
    }
  }
  const t = document.createElementNS(NS, 'text');
  t.setAttribute('class', 'rot-label');
  t.setAttribute('transform', `translate(${x + 5} 350) rotate(90)`);
  t.textContent = i === 12 ? '中央级' : '中';
  labels.appendChild(t);
}
```
